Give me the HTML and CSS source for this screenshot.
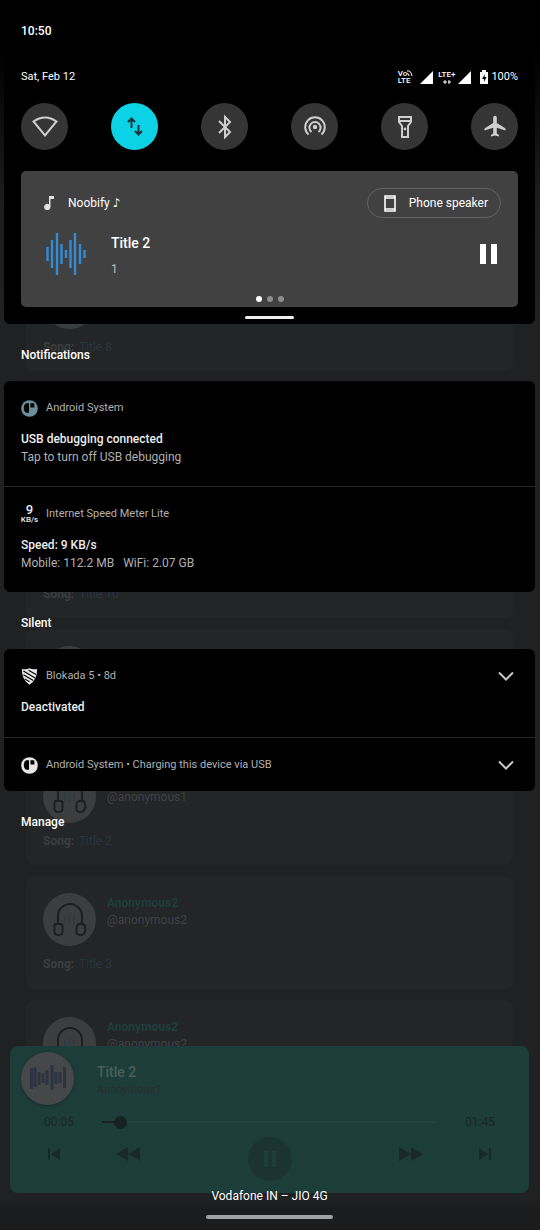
FILE: index.html
```html
<!DOCTYPE html>
<html lang="en">
<head>
<meta charset="utf-8">
<meta name="viewport" content="width=device-width, initial-scale=1">
<title>Notification shade</title>
<link rel="stylesheet" href="styles.css">
</head>
<body>
<svg class="defs" aria-hidden="true">
  <symbol id="headphones" viewBox="0 0 53 53">
    <g fill="none" stroke="#1c1e20" stroke-width="2">
      <path d="M15 31V23a12 12 0 0 1 24 0v8"/>
      <path d="M12.500 31h5q2 0 2 2v6q0 3-4 3t-4-3v-6q0-2 1-2z"/>
      <path d="M39 31q-5-1-5.500 4v4q0 3 4 3t5-5l-1-5q-1-1-2.500-1z"/>
    </g>
    <path d="M22 23v8M26.500 21v11M31 23v8" stroke="#303a42" stroke-width="2"/>
  </symbol>
  <symbol id="chevron" viewBox="0 0 16 10">
    <path d="M1 1.500 8 8.500 15 1.500" fill="none" stroke="#c6c6c6" stroke-width="2"/>
  </symbol>
  <symbol id="system" viewBox="0 0 18 18">
    <circle cx="9" cy="9" r="8.800" fill="currentColor"/>
    <path d="M5.500 3.500h3v10h-3Q3 12.500 3 8.500t2.500-5zM10 3.500h3q1.200 0 1.200 1.200V8H10z" fill="#000"/>
  </symbol>
</svg>

<div class="screen">
  <div class="app">
    <div class="posts">
      <article class="post">
        <div class="author"><svg class="avatar"><use href="#headphones"/></svg></div>
        <p class="song"><b>Song:</b> <span>Title 8</span></p>
      </article>
      <article class="post"></article>
      <article class="post">
        <div class="author"></div>
        <p class="song"><b>Song:</b> <span>Title 10</span></p>
      </article>
      <article class="post">
        <div class="author"><svg class="avatar"><use href="#headphones"/></svg></div>
      </article>
      <article class="post">
        <div class="author"><svg class="avatar"><use href="#headphones"/></svg>
          <div class="who"><span class="name"></span><span class="handle">@anonymous1</span></div></div>
        <p class="song"><b>Song:</b> <span>Title 2</span></p>
      </article>
      <article class="post">
        <div class="author"><svg class="avatar"><use href="#headphones"/></svg>
          <div class="who"><span class="name">Anonymous2</span><span class="handle">@anonymous2</span></div></div>
        <p class="song"><b>Song:</b> <span>Title 3</span></p>
      </article>
      <article class="post">
        <div class="author"><svg class="avatar"><use href="#headphones"/></svg>
          <div class="who"><span class="name">Anonymous2</span><span class="handle">@anonymous2</span></div></div>
      </article>
    </div>

    <section class="player" aria-label="Player">
      <div class="track">
        <svg class="cover" viewBox="0 0 53 53"><path d="M10.500 16v21M14 15v20M18 20v13M22 21v10M26 18v15M31 13v25M35 20v12M39 20v11M43.500 15v21" stroke="#2c3342" stroke-width="3"/></svg>
        <div class="meta"><span class="track-title">Title 2</span><span class="artist">Anonymous1</span></div>
      </div>
      <div class="seek">
        <span>00:05</span>
        <input class="slider" type="range" min="0" max="105" value="4" aria-label="Position">
        <span>01:45</span>
      </div>
      <div class="controls">
        <div class="skip">
          <button aria-label="Previous"><svg width="14" height="14" viewBox="0 0 14 14"><path d="M1 1h2v12H1zM13 1v12L4 7z"/></svg></button>
          <button aria-label="Rewind"><svg width="24" height="16" viewBox="0 0 24 16"><path d="M12 1v14L0 8zM24 1v14L12 8z"/></svg></button>
        </div>
        <button class="play" aria-label="Pause playback"><svg width="16" height="18" viewBox="0 0 16 18"><path d="M2 1h4v16H2zM10 1h4v16h-4z"/></svg></button>
        <div class="skip">
          <button aria-label="Fast forward"><svg width="24" height="16" viewBox="0 0 24 16"><path d="M0 1v14l12-7zM12 1v14l12-7z"/></svg></button>
          <button aria-label="Next"><svg width="14" height="14" viewBox="0 0 14 14"><path d="M1 1v12l9-6zM11 1h2v12h-2z"/></svg></button>
        </div>
      </div>
    </section>
  </div>

  <main class="shade">
    <section class="quick">
      <time class="clock">10:50</time>
      <div class="status">
        <span>Sat, Feb 12</span>
        <div class="signals">
          <span class="tiny volte"><span>Vo<svg width="6" height="6" viewBox="0 0 6 6"><path d="M0 1q4-1 5 5M0 3.500q2 0 2 2.500" fill="none" stroke="#fff"/></svg></span><span>LTE</span></span>
          <svg width="13" height="13" viewBox="0 0 13 13"><path d="M13 0v13H0z" fill="#fff"/></svg>
          <span class="tiny lte"><span>LTE+</span><svg width="8" height="4" viewBox="0 0 8 4"><path d="M2 0v4M0 2h4M6 0v4M5 2h3" stroke="#fff"/></svg></span>
          <svg width="13" height="13" viewBox="0 0 13 13"><path d="M13 0v13H0z" fill="#fff"/></svg>
          <svg class="battery" width="8" height="14" viewBox="0 0 8 14"><path d="M2 0h4v2h2v12H0V2h2z" fill="#fff"/><path d="M5 4 2 9h2v3l2.500-5H4.500z" fill="#000"/></svg>
          <span>100%</span>
        </div>
      </div>

      <div class="toggles">
        <button class="toggle" aria-label="Wi-Fi"><svg viewBox="0 0 28 28"><path d="M2.500 8.500Q14 .5 25.500 8.500L14 22.500z"/></svg></button>
        <button class="toggle on" aria-label="Mobile data"><svg viewBox="0 0 28 28"><path d="M10.500 15V6M7 9l3.500-3.500L14 9M17.500 12v9M14 18l3.500 3.500L21 18"/></svg></button>
        <button class="toggle" aria-label="Bluetooth"><svg viewBox="0 0 28 28"><path d="m8 8 11 11-5 5V4l5 5L8 20"/></svg></button>
        <button class="toggle" aria-label="Hotspot"><svg viewBox="0 0 28 28"><circle cx="14" cy="14" r="2.200" fill="#cfcfcf" stroke="none"/><path d="M10.500 19a5.600 5.600 0 1 1 7 0M7.500 21.500a9.800 9.800 0 1 1 13 0"/></svg></button>
        <button class="toggle" aria-label="Flashlight"><svg viewBox="0 0 28 28"><path d="M8 4h12v5l-3 4v11h-6V13L8 9zM8 8h12"/><circle cx="14" cy="16" r="1.400" fill="#cfcfcf" stroke="none"/></svg></button>
        <button class="toggle" aria-label="Airplane mode"><svg viewBox="0 0 28 28"><path d="M24.500 17.500v-2L15.800 10V4.500a1.700 1.700 0 0 0-3.600 0V10l-8.700 5.500v2l8.700-2.700v5.700L10 22v1.600l4-1.100 4 1.100V22l-2.200-1.500v-5.700z" fill="#cfcfcf" stroke="none"/></svg></button>
      </div>

      <article class="media">
        <div class="media-top">
          <svg width="10" height="14" viewBox="0 0 10 14"><path d="M5 0h5v3H6.500v8a3.200 3.200 0 1 1-1.500-2.700z" fill="#e0e0e0"/></svg>
          <span class="media-app">Noobify ♪</span>
          <button class="output"><svg width="12" height="17" viewBox="0 0 12 17"><path d="M1 1h10v15H1zM1 3h10M1 14h10" fill="none" stroke="#fff" stroke-width="1.600"/></svg>Phone speaker</button>
        </div>
        <div class="media-body">
          <svg width="42" height="44" viewBox="0 0 42 44"><g stroke="#338bd3" stroke-width="2.400"><path d="M2.500 15v14M7 8v28M12 1v42M16.500 12v20M21 18v8M25.500 8v28M30 1v42M35 12v20M39.500 18v8"/></g></svg>
          <div class="media-text"><span class="media-title">Title 2</span><span class="media-artist">1</span></div>
          <button class="pause" aria-label="Pause"><svg width="18" height="20" viewBox="0 0 18 20"><path d="M0 0h6v20H0zM11 0h6v20h-6z" fill="#fff"/></svg></button>
        </div>
        <div class="dots"><i class="current"></i><i></i><i></i></div>
      </article>
      <div class="grip"></div>
    </section>

    <h2 class="heading">Notifications</h2>
    <section class="group">
      <article class="note">
        <header><svg class="badge blue"><use href="#system"/></svg><span>Android System</span></header>
        <h3>USB debugging connected</h3>
        <p>Tap to turn off USB debugging</p>
      </article>
      <article class="note">
        <header><span class="speed"><b>9</b><small>KB/s</small></span><span>Internet Speed Meter Lite</span></header>
        <h3>Speed: 9 KB/s</h3>
        <p>Mobile: 112.2 MB &nbsp; WiFi: 2.07 GB</p>
      </article>
    </section>

    <h2 class="heading">Silent</h2>
    <section class="group">
      <article class="note single">
        <header><svg class="badge" viewBox="0 0 18 18"><path d="M1 1Q6 2 9 .2q3 1.800 8 .8Q17.500 12 9 17.800.5 12 1 1z" fill="currentColor"/><path d="M2.500 3.200 15 10.500M8 2.500l8 4.500M2.500 7.200l10.500 6M4 11.500l5 3" fill="none" stroke="#000" stroke-width="1.200"/></svg><span>Blokada 5 • 8d</span>
          <button class="expand" aria-label="Expand Blokada 5"><svg><use href="#chevron"/></svg></button></header>
        <h3>Deactivated</h3>
      </article>
      <article class="note compact">
        <header><svg class="badge"><use href="#system"/></svg><span>Android System • Charging this device via USB</span>
          <button class="expand" aria-label="Expand Android System"><svg><use href="#chevron"/></svg></button></header>
      </article>
    </section>
    <button class="heading manage">Manage</button>

    <footer class="bottom">
      <span>Vodafone IN – JIO 4G</span>
      <div class="home"></div>
    </footer>
  </main>
</div>
</body>
</html>
```
FILE: styles.css
```css
* { box-sizing: border-box; }
body, h2, h3, p { margin: 0; }
body {
  background: #1f2123;
  color: #fff;
  font-family: Roboto, "Noto Sans", "DejaVu Sans", sans-serif;
  font-size: 12px;
  line-height: 16px;
}
button {
  background: none;
  border: 0;
  color: inherit;
  font: inherit;
  padding: 0;
}
svg { display: block; flex: none; }
.defs { position: absolute; width: 0; height: 0; }

.screen {
  position: relative;
  display: flex;
  min-height: 100vh;
  overflow: hidden;
}

/* App behind the shade */
.app {
  position: absolute;
  inset: 0;
  display: flex;
  flex-direction: column;
  padding: 0 11px 37px 10px;
  background: linear-gradient(#000 50px, #1b1d1f 200px, #1f2123 320px, #1f2123 calc(100% - 30px), #1b1c1e calc(100% - 22px));
}
.posts {
  flex: 1;
  min-height: 0;
  overflow: hidden;
  display: flex;
  flex-direction: column;
  gap: 11px;
  padding: 259px 16px 0;
}
.post {
  flex: none;
  height: 112px;
  padding: 17px;
  background: #232527;
  border-radius: 8px;
}
.post:nth-child(even) { height: 113px; }
.author {
  display: flex;
  gap: 11px;
  height: 54px;
}
.avatar {
  width: 53px;
  height: 53px;
  border-radius: 50%;
  background: #3c3d3f;
}
.who { display: flex; flex-direction: column; padding-top: 2px; }
.name { height: 17px; font-weight: 700; color: #1d3e3c; }
.handle { color: #404244; }
.song { padding-top: 9px; color: #26363f; }
.song b { font-weight: 700; color: #3c3e40; margin-right: 2px; }

.player {
  height: 147px;
  padding: 6px 11px;
  background: #1d3d3b;
  border-radius: 8px;
  color: #1b2627;
}
.track { display: flex; gap: 23px; }
.cover {
  width: 53px;
  height: 53px;
  border-radius: 50%;
  background: #454749;
  box-shadow: 0 1px 3px #142c2b;
}
.meta { display: flex; flex-direction: column; padding-top: 12px; }
.track-title { font-size: 14px; font-weight: 500; color: #4c5d5c; }
.artist { font-size: 11px; line-height: 20px; color: #2b2c2c; }
.seek {
  display: flex;
  align-items: center;
  gap: 28px;
  padding: 9px 23px 0;
}
.slider {
  appearance: none;
  flex: 1;
  min-width: 0;
  height: 14px;
  margin: 0;
  background: linear-gradient(90deg, #182223 14px, #24403f 14px) center / 100% 2px no-repeat;
}
.slider::-webkit-slider-thumb {
  appearance: none;
  width: 13px;
  height: 13px;
  border-radius: 50%;
  background: #182223;
}
.controls {
  display: flex;
  align-items: flex-start;
  justify-content: space-between;
  padding: 7px 26px 0;
}
.controls button { display: flex; align-items: center; height: 34px; }
.skip { display: flex; gap: 55px; }
.controls path { fill: #1b2829; }
.controls .play {
  justify-content: center;
  width: 44px;
  height: 44px;
  border-radius: 50%;
  background: #1c3334;
}
.controls .play path { fill: #1d3d3b; }

/* Shade */
.shade {
  position: relative;
  flex: 1;
  display: flex;
  flex-direction: column;
  padding: 0 5px 11px 4px;
}
.quick {
  padding: 23px 17px 5px;
  background: #000;
  border-radius: 0 0 6px 6px;
}
.clock { display: block; font-weight: 500; }
.status {
  display: flex;
  align-items: center;
  justify-content: space-between;
  height: 16px;
  margin-top: 30px;
  font-size: 11px;
}
.signals { display: flex; align-items: center; gap: 3px; }
.battery { margin-left: 6px; }
.tiny {
  display: flex;
  flex-direction: column;
  font-size: 8px;
  font-weight: 500;
  line-height: 7px;
}
.tiny > span { display: flex; }
.volte { margin-right: 4px; }
.lte { align-items: center; gap: 2px; margin-left: 2px; }

.toggles { display: flex; justify-content: space-between; margin-top: 18px; }
.toggle {
  display: grid;
  place-items: center;
  width: 47px;
  height: 47px;
  border-radius: 50%;
  background: #353535;
}
.toggle svg { width: 28px; height: 28px; fill: none; stroke: #cfcfcf; stroke-width: 2; }
.toggle.on { background: #0bd3e5; }
.toggle.on svg { stroke: #17343a; }

.media {
  height: 136px;
  margin-top: 21px;
  padding: 17px 17px 5px 23px;
  display: flex;
  flex-direction: column;
  background: #414141;
  border-radius: 5px;
}
.media-top { display: flex; align-items: center; }
.media-app { margin-left: 14px; }
.output {
  display: flex;
  align-items: center;
  gap: 13px;
  height: 30px;
  margin-left: auto;
  padding: 0 12px 0 16px;
  border: 1px solid #626262;
  border-radius: 15px;
}
.media-body { display: flex; align-items: center; margin-top: 13px; padding-left: 1px; }
.media-text { display: flex; flex-direction: column; gap: 10px; padding-top: 4px; margin-left: 24px; }
.media-title { font-size: 14px; font-weight: 500; }
.media-artist { color: #bdbdbd; }
.pause { margin-left: auto; margin-right: 3px; }
.dots { display: flex; justify-content: center; gap: 5px; margin-top: auto; padding-right: 5px; }
.dots i { width: 6px; height: 6px; border-radius: 50%; background: #8e8e8e; }
.dots .current { background: #fff; }
.grip {
  width: 49px;
  height: 3px;
  margin: 9px auto 0;
  border-radius: 2px;
  background: #f0f0f0;
}

.heading {
  padding: 23px 17px 18px;
  font-size: 12px;
  font-weight: 500;
  line-height: 16px;
}
.manage { align-self: flex-start; }
.group { background: #000; border-radius: 6px; }
.note { height: 105px; padding: 17px; color: #b0b0b0; }
.note + .note { height: 106px; border-top: 1px solid #262626; }
.note.single { height: 88px; }
.note + .note.compact { height: 54px; }
.note header {
  display: flex;
  align-items: center;
  gap: 8px;
  height: 20px;
  font-size: 11px;
}
.note h3 {
  padding-top: 12px;
  font-size: 12px;
  font-weight: 500;
  line-height: 18px;
  color: #ececec;
}
.note p { line-height: 18px; }
.badge { width: 17px; height: 17px; color: #e6e6e6; }
.blue { color: #6c8d9d; }
.speed {
  display: flex;
  flex-direction: column;
  align-items: center;
  width: 17px;
  color: #ececec;
}
.speed b { font-size: 13px; font-weight: 500; line-height: 12px; }
.speed small { font-size: 8px; font-weight: 500; line-height: 8px; }
.expand { margin-left: auto; margin-right: 4px; }
.expand svg { width: 16px; height: 10px; }

.bottom {
  display: flex;
  flex-direction: column;
  align-items: center;
  gap: 11px;
  margin-top: auto;
}
.home { width: 127px; height: 4px; border-radius: 2px; background: #a0a0a0; }
```
